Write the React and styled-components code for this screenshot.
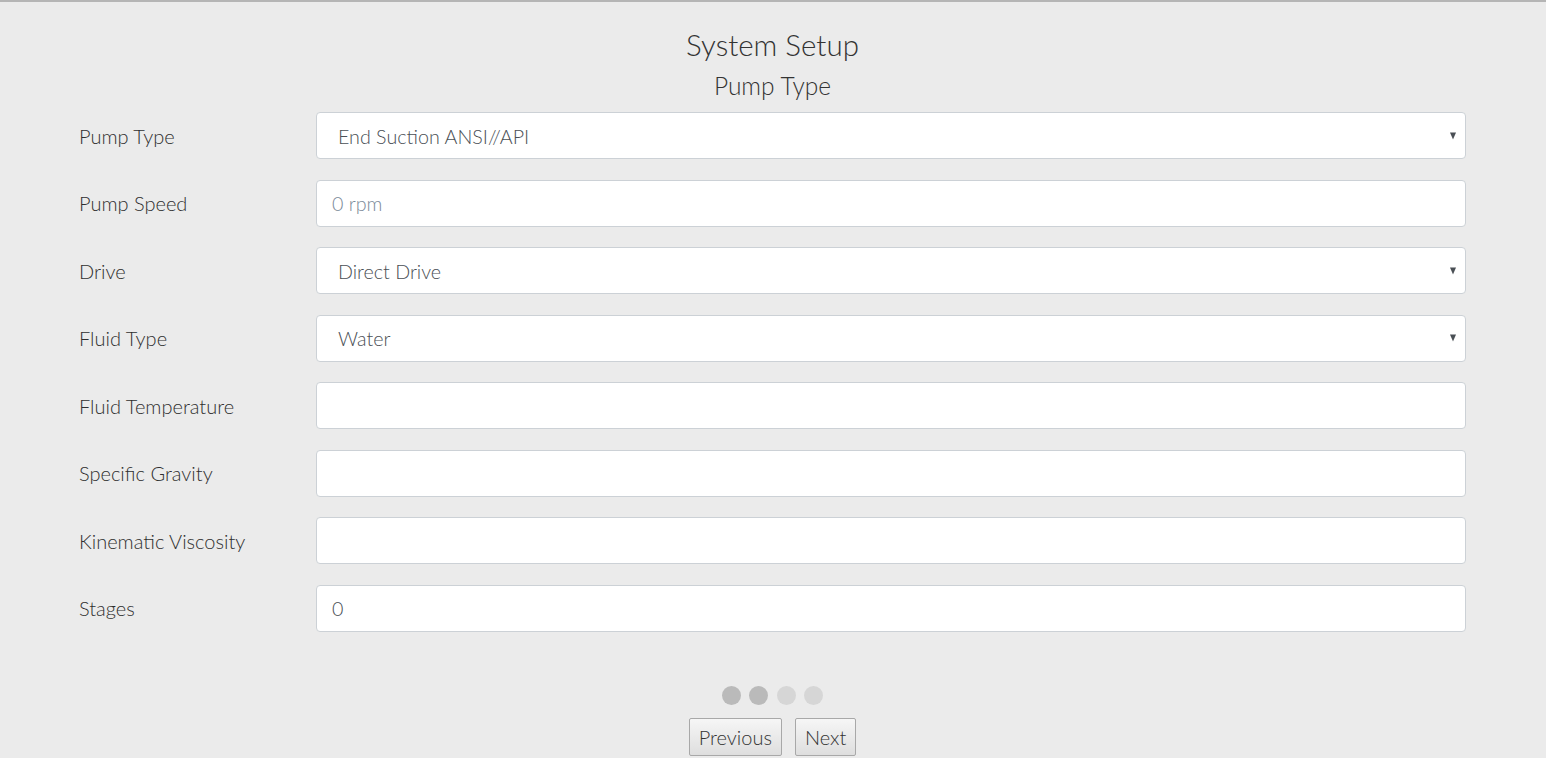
import styled, { createGlobalStyle } from 'styled-components'

const GlobalStyle = createGlobalStyle`
  html, body {
    margin: 0;
    padding: 0;
    background: #ebebeb;
    font-family: Lato, "Open Sans", sans-serif;
    color: #333;
  }
`

const Page = styled.div`
  min-height: 100vh;
  box-sizing: border-box;
  border-top: 2px solid #b5b5b5;
  padding: 26px 80px 0 79px;
`

const Title = styled.h1`
  margin: 0;
  text-align: center;
  font-size: 29.5px;
  font-weight: 300;
  line-height: 34px;
  color: #333;
`

const Subtitle = styled.h2`
  margin: 9px 0 11px;
  text-align: center;
  font-size: 24.5px;
  font-weight: 300;
  line-height: 30px;
  color: #333;
`

const Form = styled.form`
  display: flex;
  flex-direction: column;
  gap: 20.5px;
`

const Row = styled.div`
  display: grid;
  grid-template-columns: 237px 1fr;
  align-items: center;
`

const Label = styled.label`
  font-size: 20px;
  font-weight: 300;
  color: #2f2f2f;
`

const Field = styled.div`
  position: relative;
  height: 47px;
  box-sizing: border-box;
  background: #fff;
  border: 1px solid #ccd1d6;
  border-radius: 4px;
  display: flex;
  align-items: center;
  padding-left: ${(p) => (p.$select ? '21px' : '15px')};
  padding-top: 1px;
  font-size: 19.7px;
  font-weight: 300;
  color: ${(p) => (p.$placeholder ? '#7b8a99' : '#4a4f55')};
`

const Arrow = styled.span`
  position: absolute;
  right: 9px;
  top: 50%;
  transform: translateY(-50%);
  width: 0;
  height: 0;
  border-left: 3.5px solid transparent;
  border-right: 3.5px solid transparent;
  border-top: 7px solid #4a4f55;
`

const Dots = styled.div`
  display: flex;
  justify-content: center;
  gap: 8.5px;
  margin-top: 54px;
`

const Dot = styled.span`
  width: 19px;
  height: 19px;
  border-radius: 50%;
  background: ${(p) => (p.$active ? '#bababa' : '#d6d6d6')};
`

const Buttons = styled.div`
  display: flex;
  justify-content: center;
  gap: 13px;
  margin-top: 13px;
`

const Button = styled.button`
  height: 38px;
  padding: 0 9px;
  font-family: Lato, sans-serif;
  font-size: 20px;
  font-weight: 300;
  color: #333;
  background: linear-gradient(#f6f6f6, #dedede);
  border: 1px solid #a8a8a8;
  border-radius: 2px;
  cursor: pointer;
`

const rows = [
  { label: 'Pump Type', value: 'End Suction ANSI//API', select: true },
  { label: 'Pump Speed', value: '0 rpm', placeholder: true },
  { label: 'Drive', value: 'Direct Drive', select: true },
  { label: 'Fluid Type', value: 'Water', select: true },
  { label: 'Fluid Temperature', value: '' },
  { label: 'Specific Gravity', value: '' },
  { label: 'Kinematic Viscosity', value: '' },
  { label: 'Stages', value: '0' },
]

export default function App() {
  return (
    <>
      <GlobalStyle />
      <Page>
        <Title>System Setup</Title>
        <Subtitle>Pump Type</Subtitle>
        <Form onSubmit={(e) => e.preventDefault()}>
          {rows.map((r) => (
            <Row key={r.label}>
              <Label>{r.label}</Label>
              <Field $select={r.select} $placeholder={r.placeholder}>
                {r.value}
                {r.select && <Arrow />}
              </Field>
            </Row>
          ))}
        </Form>
        <Dots>
          <Dot $active />
          <Dot $active />
          <Dot />
          <Dot />
        </Dots>
        <Buttons>
          <Button type="button">Previous</Button>
          <Button type="button">Next</Button>
        </Buttons>
      </Page>
    </>
  )
}
